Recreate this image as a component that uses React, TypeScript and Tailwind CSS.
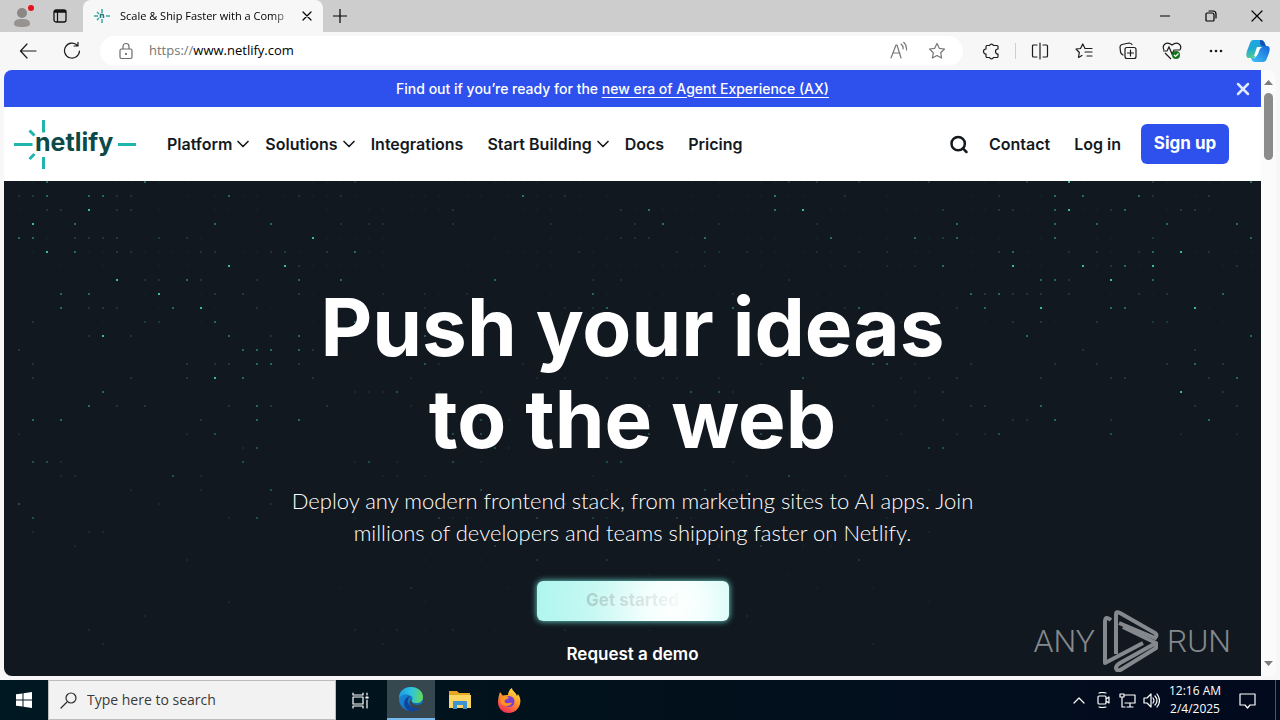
import type { ReactNode } from 'react';
import { ChevronDown, Search, X } from 'lucide-react';

const uiFont = "font-['Open_Sans','Noto_Sans',sans-serif]";
const siteFont = 'font-[Inter,sans-serif]';

// One string per grid row, "column+brightness" pairs: a = faint, b = medium, c = bright.
const SPARKS = [
  '2b 9b 72a 75c 81a 88b',
  '0a 1a 2b 5b 6b 7a 8a 15b 20a 70a 74b 76b 80b 81a 85a',
  '2a 3a 5c 7a 8a 56c 66a 70a 71a 74b 75c 78a 79b 83a 84a',
  '1c 4b 14b 18b 67b 74b 77b 82b 87b',
  '0b 1b 4a 5a 6a 7a 10a 12a 21c 66a 67b 74b 81a 88b',
  '2c 4b 7a 8a 13a 14a 18a 19a 22a 70a 71b 75a 77a 80a 81b 83c 85a',
  '15c 19c 20a 66b 71c 76c 78a 79b 81c 87a',
  '7c 9a 10a 12b 13a 17a 20b 73b 74b 75a 78c 81b',
  '3b 5b 10c 14a 16a 20a 68b 69a 70b 71a 72a 73a 75a 80a 82a 86b',
  '3b 5a 6a 7a 11b 13c 17a 22c 67a 69b 73c 78b 79b 84c',
  '1a 9a 10a 14b 71a 73a 77a 81a 82a',
  '5a 6c 8a 15b 18a 20b 22a 72b 88b',
  '0a 16b 17b 18b 20b 21a 22a 76a 84a',
  '1a 12a 14a 15a 17b 18b 20a 68a 74a 77a 82a 84b 86a',
  '1a 8a 12a 14c 16b 21a 67a 73a 78a 79a 85a 87b',
  '6b 66a 83c 86a',
  '5b 7a 9a 15a 17b 18a 22a 68a 69a 73b 84a 87a',
  '1b 3b 13a 17b 20b 66a 71a 72a 74b 78a 85b',
  '0a 12a 14b 67a 69a 70b 78b 83a 87a',
  '16a 17b 66b',
  '1b 2b 3a 16b',
  '3a 4a 11b 13a',
  '8a 13a 18b',
  '0b 10a 18a',
  '1b 15a 17b',
  '1a 5a 6a',
  '4a',
  '12a',
  '',
  '',
  '15a',
  '9a',
  '5a',
  '6a',
];

const LEVELS = { a: 0.16, b: 0.42, c: 0.85 };

function noise(col: number, row: number) {
  const n = Math.sin(col * 127.1 + row * 311.7) * 43758.5453;
  return n - Math.floor(n);
}

function DotField() {
  const dots: ReactNode[] = [];

  SPARKS.forEach((line, row) => {
    line.split(' ').filter(Boolean).forEach((item) => {
      const col = parseInt(item, 10);
      const level = LEVELS[item.slice(-1) as keyof typeof LEVELS];
      const fade = row > 17 ? 0.7 : 1;
      dots.push(
        <rect key={`s${row}-${col}`} x={14 + col * 14} y={row * 14} width="2" height="2" opacity={level * fade} />,
      );
    });
    for (let col = 0; col < 89; col++) {
      const n = noise(col, row);
      const center = col > 22 && col < 66;
      let level = n < 0.4 ? 0.04 : 0;
      if (center && n > 0.85) level = 0.16;
      if (center && n > 0.96) level = 0.5;
      if (level) {
        dots.push(
          <rect
            key={`n${row}-${col}`}
            x={14 + col * 14}
            y={row * 14}
            width="2"
            height="2"
            opacity={level * (1 - row / 40)}
          />,
        );
      }
    }
  });

  return (
    <svg className="absolute inset-0 h-full w-full" fill="#3fd6bd" aria-hidden="true">
      {dots}
    </svg>
  );
}

type IconButtonProps = { label: string; className?: string; children: ReactNode };

function IconButton({ label, className = 'w-11 h-8', children }: IconButtonProps) {
  return (
    <button type="button" aria-label={label} className={`flex shrink-0 items-center justify-center ${className}`}>
      {children}
    </button>
  );
}

function Line({ d, size = 18, className = '' }: { d: string; size?: number; className?: string }) {
  return (
    <svg
      width={size}
      height={size}
      viewBox={`0 0 ${size} ${size}`}
      fill="none"
      stroke="currentColor"
      strokeWidth="1.2"
      strokeLinecap="round"
      strokeLinejoin="round"
      className={className}
      aria-hidden="true"
    >
      <path d={d} />
    </svg>
  );
}

function TabStrip() {
  return (
    <div className="flex h-8 items-stretch bg-[#cdcdcd]">
      <IconButton label="Profile" className="w-11">
        <svg width="24" height="26" viewBox="0 0 24 26" aria-hidden="true">
          <circle cx="12" cy="10" r="5" fill="#8b8785" />
          <path d="M4 21c0-4 3-5 8-5s8 1 8 5c0 2-3 3-8 3s-8-1-8-3z" fill="#979390" />
          <circle cx="21" cy="5" r="3" fill="#e3111b" />
        </svg>
      </IconButton>
      <IconButton label="Tab actions" className="w-8">
        <svg width="14" height="14" viewBox="0 0 14 14" fill="none" stroke="#111" aria-hidden="true">
          <rect x="1" y="1" width="12" height="12" rx="2" strokeWidth="1.3" />
          <path d="M1 2.500h12" strokeWidth="2.500" />
          <path d="M4.500 3v10" strokeWidth="1.2" />
        </svg>
      </IconButton>
      <div className="ml-[7px] flex w-60 items-center rounded-t-lg bg-[#f7f7f7] pl-[11px] pr-1.5">
        <svg width="16" height="16" viewBox="0 0 16 16" stroke="#35aaa8" strokeWidth="1.5" aria-hidden="true">
          <path d="M8 1v4M8 11v4M0 8h4M12 8h4M3 4l2 2M3 12l2-2" />
          <path d="M6.500 10V6.500h2Q9.500 6.500 9.500 8v2" fill="none" stroke="#2b7477" />
        </svg>
        <p className="ml-2.5 flex-1 whitespace-nowrap text-[11px] text-black [mask-image:linear-gradient(to_right,black_86%,transparent)]">
          Scale &amp; Ship Faster with a Comp
        </p>
        <IconButton label="Close tab" className="h-5 w-5">
          <Line size={10} d="M1 1l8 8M9 1l-8 8" />
        </IconButton>
      </div>
      <IconButton label="New tab" className="w-[34px]">
        <Line size={14} d="M7 0v14M0 7h14" />
      </IconButton>
      <div className="ml-auto flex">
        <IconButton label="Minimize" className="w-[46px]">
          <Line size={10} d="M0 5h10" />
        </IconButton>
        <IconButton label="Restore" className="w-[46px]">
          <Line size={12} d="M2 3h5q2 0 2 2v5q0 1-1 1H2q-1 0-1-1V4q0-1 1-1M4 1h4q3 0 3 3v4" />
        </IconButton>
        <IconButton label="Close" className="w-[46px]">
          <Line size={12} d="M1 1l10 10M11 1L1 11" />
        </IconButton>
      </div>
    </div>
  );
}

function Toolbar() {
  return (
    <div className="flex h-[38px] items-center bg-[#f7f7f7] pl-1.5 pr-0.5 text-[#1b1b1b]">
      <IconButton label="Back">
        <Line d="M17 9H2M8 2L1.500 9L8 16" />
      </IconButton>
      <IconButton label="Refresh">
        <Line d="M14.500 3.500A7.500 7.500 0 1 0 16.500 9M15 0v4h-4" />
      </IconButton>
      <div className="mx-1.5 flex h-[30px] flex-1 items-center rounded-full bg-white pl-[17px] pr-1">
        <svg width="18" height="18" viewBox="0 0 18 18" fill="none" stroke="#6b6b6b" strokeWidth="1.200" aria-hidden="true">
          <rect x="3" y="7" width="12" height="9.500" rx="1.500" />
          <path d="M6 7V4.500a3 3 0 0 1 6 0V7" />
          <circle cx="9" cy="12" r="1" fill="#555" stroke="none" />
        </svg>
        <label htmlFor="address" className="ml-3.5 text-[13px] text-[#757575]">
          https://
        </label>
        <input
          id="address"
          type="text"
          defaultValue="www.netlify.com"
          className="min-w-0 flex-1 bg-transparent text-[13px] text-black outline-none"
        />
        <IconButton label="Read aloud" className="h-7 w-8 text-[#777]">
          <Line d="M1 16L6 3h1l4 13M3 11h7M11 2q2.500 2 2 5M13.500 0q3.500 3 3 8" />
        </IconButton>
        <IconButton label="Add to favorites" className="h-7 w-11 text-[#777]">
          <Line d="M9 1.500l2.300 4.800 5.200.7-3.800 3.700.9 5.300L9 13.500 4.400 16l.9-5.300L1.500 7l5.200-.7z" />
        </IconButton>
      </div>
      <IconButton label="Extensions">
        <Line
          size={19}
          d="M5 3.500h2.500a2.200 2.200 0 0 1 4 0H15q1 0 1 1V7a2 2 0 0 0 0 5v2.500q0 1-1 1h-3.500a2.200 2.200 0 0 1-4 0H5q-1 0-1-1V12a2.400 2.400 0 0 1 0-5V4.500q0-1 1-1"
        />
      </IconButton>
      <div className="mx-0.5 h-4 w-px bg-[#cfcfcf]" />
      <IconButton label="Split screen">
        <Line d="M6 3H2.500Q1.500 3 1.500 4v10q0 1 1 1H6M12 3h3.500q1 0 1 1v10q0 1-1 1H12M9 1v16" />
      </IconButton>
      <IconButton label="Favorites">
        <Line d="M10 6.500L7.800 2 5.500 6.500 1 7l3.300 3.500-.8 5L7 13.500M10 6.500h7M10 10h7M12 14h5" />
      </IconButton>
      <IconButton label="Collections">
        <Line d="M8 5.500h7q2 0 2 2v7q0 2-2 2H8q-2 0-2-2v-7q0-2 2-2M11.500 8v6M8.500 11h6M4 13Q2 12 1.500 10L1 5q0-2 2-2.500L10 1q2 0 3 1.500" />
      </IconButton>
      <IconButton label="Browser essentials">
        <svg width="20" height="20" viewBox="0 0 20 20" fill="none" stroke="currentColor" strokeWidth="1.200" aria-hidden="true">
          <path d="M2 9Q0 5 3 3t7 1q4-3 7-1t1 6M3 12l6 6M1 10h4l2-4 3 7 2-4h6" />
          <circle cx="14" cy="14" r="4" fill="#13751a" stroke="none" />
          <path d="M12 14l1.500 1.500 3-3" stroke="white" />
        </svg>
      </IconButton>
      <IconButton label="Settings and more">
        <svg width="14" height="4" viewBox="0 0 14 4" fill="currentColor" aria-hidden="true">
          <circle cx="2" cy="2" r="1.300" />
          <circle cx="7" cy="2" r="1.300" />
          <circle cx="12" cy="2" r="1.300" />
        </svg>
      </IconButton>
      <IconButton label="Copilot" className="h-8 w-10">
        <svg width="24" height="24" viewBox="0 0 24 24" aria-hidden="true">
          <defs>
            <linearGradient id="copilot-left" x1="0" y1="0" x2="0.300" y2="1">
              <stop offset="0" stopColor="#1aa7ea" />
              <stop offset="0.500" stopColor="#1fa7d5" />
              <stop offset="1" stopColor="#52cd8e" />
            </linearGradient>
            <linearGradient id="copilot-right" x1="0" y1="1" x2="1" y2="0">
              <stop offset="0" stopColor="#3fc5f8" />
              <stop offset="1" stopColor="#1464d6" />
            </linearGradient>
          </defs>
          <path d="M7 1h8q3 0 4 4l1 3h-5q-2 0-3 3l-2 5q-1 3-4 3H3q-4 0-2-7L4 4q1-3 3-3z" fill="url(#copilot-left)" />
          <path d="M14 1q4 0 5 4l1 2h-3q-3 0-3-3z" fill="#1551b8" />
          <path d="M17 23H9q-3 0-4-4h2q3 0 4-3l2-5q1-4 4-4h4q4 0 2 7l-2 5q-1 4-4 4z" fill="url(#copilot-right)" />
          <path d="M11 8h5q-2 1-3 4l-1 3q-1 2-3 2H8z" fill="white" />
        </svg>
      </IconButton>
    </div>
  );
}

function NetlifyLogo() {
  return (
    <a href="#home" aria-label="Netlify home" className="shrink-0">
      <svg width="122" height="50" viewBox="0 0 122 50">
        <path
          d="M29.500 1v12.500M29.500 38v12M0 25.500h18.500M104 25.500h18M15.500 11.500l5 5M15.500 40l5-5"
          stroke="#20b5ad"
          strokeWidth="3"
        />
        <text x="21" y="32" fill="#0b4a48" fontFamily="Inter, sans-serif" fontSize="25" fontWeight="700">
          netlify
        </text>
      </svg>
    </a>
  );
}

function NavMenu({ children }: { children: string }) {
  return (
    <button type="button" className="-mr-3 flex items-center gap-px font-semibold">
      {children}
      <ChevronDown size={20} strokeWidth={2} aria-hidden="true" />
    </button>
  );
}

function SiteHeader() {
  return (
    <header className="flex h-[74px] shrink-0 items-center bg-white pl-2.5 pr-8 text-base font-semibold text-[#14191e]">
      <NetlifyLogo />
      <nav className="ml-[31px] flex items-center gap-6 whitespace-nowrap">
        <NavMenu>Platform</NavMenu>
        <NavMenu>Solutions</NavMenu>
        <a href="#integrations">Integrations</a>
        <NavMenu>Start Building</NavMenu>
        <a href="#docs">Docs</a>
        <a href="#pricing">Pricing</a>
      </nav>
      <div className="ml-auto flex items-center whitespace-nowrap">
        <IconButton label="Search" className="mr-5 h-6 w-5">
          <Search size={21} strokeWidth={3} />
        </IconButton>
        <a href="#contact" className="mr-6">Contact</a>
        <a href="#login" className="mr-5">Log in</a>
        <a
          href="#signup"
          className="flex h-10 w-[88px] items-center justify-center rounded-md bg-[#2e51ed] text-[17px] font-bold text-white"
        >
          Sign up
        </a>
      </div>
    </header>
  );
}

function Watermark() {
  return (
    <div className="absolute bottom-1 right-[30px] flex items-center gap-2 font-[Roboto,'Liberation_Sans',sans-serif] text-[32px] font-light text-[#85898d]">
      <span>ANY</span>
      <svg width="56" height="62" viewBox="0 0 56 62" fill="none" stroke="currentColor" strokeWidth="4" strokeLinejoin="round" aria-hidden="true">
        <path d="M8 10Q2 5 2 12v41l38-20" />
        <path d="M13 44V4q0-3 4-1l35 20q3 2 0 5L16 13" />
        <path d="M20 17l33 16-36 20q-6 4-3 7 2 1 5-1l34-21v-5" />
      </svg>
      <span>RUN</span>
    </div>
  );
}

function Hero() {
  return (
    <main className="relative flex-1 overflow-hidden bg-[#11181f] text-white">
      <DotField />
      <div className="relative flex flex-col items-center pt-[100px] text-center">
        <h1 className="text-[80px] font-bold leading-[92px]">
          Push your ideas
          <br />
          to the web
        </h1>
        <p className="mt-5 max-w-[720px] font-[Lato,sans-serif] text-[22px] font-light leading-8">
          Deploy any modern frontend stack, from marketing sites to AI apps. Join
          <br />
          millions of developers and teams shipping faster on Netlify.
        </p>
        <a
          href="#start"
          className="mt-8 flex h-10 w-48 items-center justify-center rounded-md bg-[radial-gradient(circle_at_72%_60%,#ffffff_0%,#f4fffd_20%,#c8f8f3_58%,#aef6ef_100%)] text-[17px] font-bold shadow-[0_0_6px_#70e6da]"
        >
          <span className="bg-linear-to-r from-[#a9cfcb] via-[#cfdfdd] to-[#f4faf9] bg-clip-text text-transparent">
            Get started
          </span>
        </a>
        <a href="#demo" className="mt-[21px] text-[17px] font-semibold leading-6">
          Request a demo
        </a>
      </div>
      <Watermark />
    </main>
  );
}

function Scrollbar() {
  return (
    <div className="flex w-[15px] flex-col items-center bg-[#fbfbfb] py-2.5 text-[#7c7c7c]" aria-hidden="true">
      <svg width="9" height="5" viewBox="0 0 9 5" fill="currentColor">
        <path d="M0 5L4.500 0 9 5z" />
      </svg>
      <div className="mt-2 h-[67px] w-[9px] rounded-full bg-[#8b8b8b]" />
      <svg width="9" height="5" viewBox="0 0 9 5" fill="currentColor" className="mt-auto">
        <path d="M0 0h9L4.500 5z" />
      </svg>
    </div>
  );
}

function EdgeIcon() {
  return (
    <svg width="26" height="26" viewBox="0 0 26 26" aria-hidden="true">
      <defs>
        <linearGradient id="edge-top" x1="0" y1="0.400" x2="1" y2="0.500">
          <stop offset="0" stopColor="#1b9de2" />
          <stop offset="0.500" stopColor="#2fc4df" />
          <stop offset="1" stopColor="#63d957" />
        </linearGradient>
        <linearGradient id="edge-low" x1="0" y1="0" x2="1" y2="1">
          <stop offset="0" stopColor="#1a8fdc" />
          <stop offset="1" stopColor="#1263b4" />
        </linearGradient>
      </defs>
      <circle cx="13" cy="13" r="12" fill="url(#edge-low)" />
      <path d="M1 12C1 5 6 1 13 1s12 4.500 12 10c0 4-3 6-6 6-4 0-6-1-5-3 1-1 1-3-1-4-4-3-10-2-12 2z" fill="url(#edge-top)" />
      <path d="M13.500 10c-4 2-5 6-2 9s8 3 12 1c-3 5-8 6-12 5-5-2-7-8-4-12 1-2 4-3 6-3z" fill="#10479c" />
      <path d="M13.500 13c-1 3 2 6 6 6 2 0 4-1 5-2l1 2-3 3c-4 1-10 0-11-5 0-2 1-3 2-4z" fill="#37454c" />
    </svg>
  );
}

function FirefoxIcon() {
  return (
    <svg width="24" height="25" viewBox="0 0 24 25" aria-hidden="true">
      <defs>
        <linearGradient id="fox" x1="0.800" y1="0" x2="0.300" y2="1">
          <stop offset="0" stopColor="#ffed45" />
          <stop offset="0.450" stopColor="#ff9a2a" />
          <stop offset="1" stopColor="#f52b57" />
        </linearGradient>
      </defs>
      <path d="M3 4l3 4c2-1 3-1 5-1 0-3 2-6 4-7 0 3 4 4 5 8l1-2c2 3 3 6 2 10-1 5-6 9-11 9C5 25 1 20 1 14c0-4 1-7 2-10z" fill="url(#fox)" />
      <circle cx="12" cy="13.500" r="5.500" fill="#7a3ed0" />
      <path d="M5 8c3-1 5 0 7 2l-4 2c-1 1 0 3 1 3 2 1 4-1 6 0-2 4-9 4-11 0-1-2 0-5 1-7z" fill="#ff9425" />
    </svg>
  );
}

function Taskbar() {
  return (
    <footer className="flex h-10 shrink-0 items-stretch bg-linear-to-r from-[#001821] via-[#02111c] to-[#020a1e] text-white">
      <IconButton label="Start" className="w-12">
        <svg width="16" height="16" viewBox="0 0 16 16" fill="white" aria-hidden="true">
          <path d="M0 2.300L6.500 1.400v6H0zM7.500 1.200L16 0v7.400H7.500zM0 8.400h6.500v6.200L0 13.700zM7.500 8.400H16V16l-8.500-1.200z" />
        </svg>
      </IconButton>
      <div className="flex w-72 items-center border border-[#bcbcbc] bg-[#f2f2f2] pl-[11px] text-[#2b2b2b]">
        <Line size={17} d="M6.500 10.500L1 16M16 6A5 5 0 1 1 6 6A5 5 0 1 1 16 6" />
        <input
          type="text"
          aria-label="Search"
          placeholder="Type here to search"
          className="ml-2.5 min-w-0 flex-1 bg-transparent text-sm outline-none placeholder:text-[#3a3a3a]"
        />
      </div>
      <IconButton label="Task view" className="w-12">
        <Line size={17} d="M1 1v2h10V1M1 16v-2h10v2M1 5h10v7H1zM15 1v2M15 8v8M14 5h2v1h-2z" />
      </IconButton>
      <IconButton label="Microsoft Edge" className="ml-[3px] w-12 border-b-2 border-[#76b9ed] bg-[#37474f]">
        <EdgeIcon />
      </IconButton>
      <IconButton label="File Explorer" className="ml-px w-12">
        <svg width="22" height="20" viewBox="0 0 22 20" aria-hidden="true">
          <path d="M0 1h8l2 2h11v15H0z" fill="#e8a723" />
          <path d="M0 5h22v13H0z" fill="#fcd664" />
          <path d="M4 19v-7q0-1 1-1h12q1 0 1 1v7h-4v-4H8v4z" fill="#3e92d2" />
        </svg>
      </IconButton>
      <IconButton label="Firefox" className="ml-px w-12">
        <FirefoxIcon />
      </IconButton>
      <div className="ml-auto flex">
        <IconButton label="Show hidden icons" className="w-6">
          <Line size={12} d="M1 9l5-5 5 5" />
        </IconButton>
        <IconButton label="Meet now" className="w-6">
          <Line size={16} d="M4 4h6q1 0 1 1v6q0 1-1 1H4q-1 0-1-1V5q0-1 1-1M11 7l3-2v6l-3-2M4 1q3-1 7 0M4 15q3 1 7 0" />
        </IconButton>
        <IconButton label="Network" className="w-6">
          <Line size={17} d="M6 3h10v8H6M11 11v4M8 15h6M1 2h4v3H1zM3 5v10h3" />
        </IconButton>
        <IconButton label="Volume" className="w-6">
          <Line size={17} d="M1 6h3l4-4v13l-4-4H1zM10 6q2 2.500 0 5M12 4q4 4.500 0 9M14 2q5 6.500 0 13" />
        </IconButton>
        <button type="button" className="w-16 text-xs leading-[18px]">
          12:16 AM
          <br />
          2/4/2025
        </button>
        <IconButton label="Notifications" className="w-10">
          <Line size={17} d="M1 2h15v11h-5l-2.500 3L6 13H1z" />
        </IconButton>
        <div className="ml-2 w-[5px] border-l border-[#4a5560]" />
      </div>
    </footer>
  );
}

export default function App() {
  return (
    <div className={`flex h-screen flex-col overflow-hidden bg-[#f7f7f7] ${uiFont}`}>
      <TabStrip />
      <Toolbar />
      <div className="mx-1 mb-1 flex min-h-0 flex-1 overflow-hidden rounded-lg">
        <div className={`flex min-w-0 flex-1 flex-col ${siteFont}`}>
          <div className="flex h-[37px] shrink-0 items-center bg-[#2e51ed] pr-2 text-white">
            <p className="flex-1 pl-1 text-center text-sm font-medium">
              Find out if you’re ready for the{' '}
              <a href="#ax" className="underline underline-offset-3">
                new era of Agent Experience (AX)
              </a>
            </p>
            <IconButton label="Dismiss banner" className="ml-4 h-5 w-5 text-[#dfe9ff]">
              <X size={22} strokeWidth={3} />
            </IconButton>
          </div>
          <SiteHeader />
          <Hero />
        </div>
        <Scrollbar />
      </div>
      <Taskbar />
    </div>
  );
}
